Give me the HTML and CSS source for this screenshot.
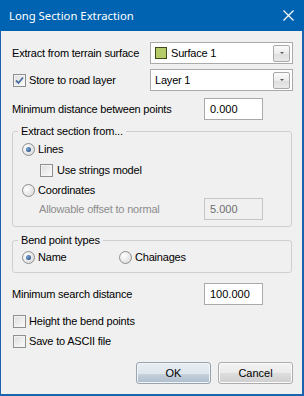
FILE: index.html
```html
<!DOCTYPE html>
<html lang="en">
  <head>
    <meta charset="UTF-8" />
    <title>Long Section Extraction</title>
    <link rel="stylesheet" href="styles.css">
  </head>
  <body>
    <div class="dialog">
      <div class="titlebar">
        <span class="title">Long Section Extraction</span>
        <svg class="close" width="11" height="11" viewBox="0 0 11 11">
          <path d="M0.5 0.5 L10.5 10.5 M10.5 0.5 L0.5 10.5" stroke="#fff" stroke-width="1.2" fill="none" />
        </svg>
      </div>

      <div class="content">
        <div class="row row-first">
          <span class="label">Extract from terrain surface</span>
          <div class="combo">
            <span class="swatch"></span>
            <span class="combo-text">Surface 1</span>
            <span class="drop"><span class="arrow"></span></span>
          </div>
        </div>

        <div class="row row-second">
          <span class="check-item">
            <span class="checkbox checked">
              <svg width="9" height="9" viewBox="0 0 9 9">
                <path d="M1 4.5 L3.5 7 L8 1.5" stroke="#4a6fa0" stroke-width="1.8" fill="none" />
              </svg>
            </span>
            Store to road layer
          </span>
          <div class="combo">
            <span class="combo-text">Layer 1</span>
            <span class="drop"><span class="arrow"></span></span>
          </div>
        </div>

        <div class="row row-third">
          <span class="label">Minimum distance between points</span>
          <div class="field">0.000</div>
        </div>

        <fieldset class="group group-extract">
          <legend>Extract section from...</legend>
          <div class="option"><span class="radio selected"></span>Lines</div>
          <div class="option option-sub">
            <span class="checkbox"></span>Use strings model
          </div>
          <div class="option option-coords"><span class="radio"></span>Coordinates</div>
          <div class="row row-offset">
            <span class="label disabled">Allowable offset to normal</span>
            <div class="field field-disabled">5.000</div>
          </div>
        </fieldset>

        <fieldset class="group group-bend">
          <legend>Bend point types</legend>
          <div class="radio-row">
            <div class="option option-name"><span class="radio selected"></span>Name</div>
            <div class="option"><span class="radio"></span>Chainages</div>
          </div>
        </fieldset>

        <div class="row row-search">
          <span class="label">Minimum search distance</span>
          <div class="field">100.000</div>
        </div>

        <div class="check-item check-height">
          <span class="checkbox"></span>Height the bend points
        </div>
        <div class="check-item check-ascii">
          <span class="checkbox"></span>Save to ASCII file
        </div>

        <div class="buttons">
          <button class="btn btn-default">OK</button>
          <button class="btn">Cancel</button>
        </div>
      </div>
    </div>
  </body>
</html>
```

FILE: styles.css
```css
* {
  margin: 0;
  padding: 0;
  box-sizing: border-box;
}

body {
  font-family: "Liberation Sans", Arial, sans-serif;
  font-size: 11px;
  color: #000;
  background: #fff;
}

.dialog {
  width: 304px;
  height: 396px;
  background-color: #f0f0f0;
  border-left: 1px solid #1c63ad;
  border-right: 2px solid #1c63ad;
  border-bottom: 2px solid #1c63ad;
}

.titlebar {
  height: 31px;
  background-color: #0063b1;
  display: flex;
  align-items: center;
  justify-content: space-between;
  padding: 0 10px 0 9px;
  margin-left: -1px;
  margin-right: -2px;
}

.title {
  font-family: "Noto Sans", "Open Sans", sans-serif;
  font-size: 11.3px;
  color: #fff;
}

.close {
  display: block;
}

.content {
  padding: 0 9px 0 11px;
}

.row {
  display: flex;
  align-items: center;
  justify-content: space-between;
  height: 22px;
}

.row-first {
  margin-top: 11px;
}

.row-second {
  margin-top: 5px;
}

.row-third {
  margin-top: 7px;
}

.row-search {
  margin-top: 10px;
}

.label {
  letter-spacing: -0.2px;
}

.label.disabled {
  color: #8d8d8d;
  padding-left: 17px;
}

.combo {
  width: 143px;
  height: 22px;
  background: #fff;
  border: 1px solid #aaaaaa;
  display: flex;
  align-items: center;
  padding: 0 2px 0 4px;
}

.combo-text {
  flex: 1;
  letter-spacing: -0.2px;
}

.swatch {
  width: 12px;
  height: 12px;
  background-color: #b5cb6a;
  border: 1px solid #3e4a1a;
  margin-right: 4px;
}

.drop {
  width: 17px;
  height: 17px;
  border: 1px solid #a9a9a9;
  border-radius: 2px;
  background: linear-gradient(#fbfbfb, #ececec 50%, #dedede 51%, #e9e9e9);
  display: flex;
  align-items: center;
  justify-content: center;
}

.arrow {
  width: 0;
  height: 0;
  border-left: 2px solid transparent;
  border-right: 2px solid transparent;
  border-top: 2px solid #555;
}

.field {
  width: 59px;
  height: 22px;
  margin-right: 30px;
  background: #fff;
  border: 1px solid #aaaaaa;
  padding: 0 0 0 5px;
  line-height: 20px;
}

.field-disabled {
  background: #f0f0f0;
  border-color: #c5c5c5;
  color: #6d6d6d;
  margin-right: 28px;
}

.check-item {
  display: flex;
  align-items: center;
  height: 14px;
  padding-left: 1px;
  letter-spacing: -0.2px;
}

.check-height {
  margin-top: 9px;
}

.check-ascii {
  margin-top: 6px;
}

.checkbox {
  width: 13px;
  height: 13px;
  border: 1px solid #8e8f8f;
  background: linear-gradient(135deg, #dcdcdc, #fdfdfd);
  box-shadow: inset 0 0 0 1px #f4f4f4;
  margin-right: 3px;
  display: flex;
  align-items: center;
  justify-content: center;
}

.radio {
  width: 13px;
  height: 13px;
  border-radius: 50%;
  border: 1px solid #8e8f8f;
  background: radial-gradient(circle at 35% 35%, #ffffff, #d5d5d5);
  margin-right: 3px;
  display: flex;
  align-items: center;
  justify-content: center;
}

.radio.selected::after {
  content: "";
  width: 5px;
  height: 5px;
  border-radius: 50%;
  background: radial-gradient(circle at 35% 35%, #7aa5d6, #1b3f73);
}

.group {
  border: 1px solid #cfcfcf;
  border-radius: 3px;
  margin-right: 1px;
  padding: 0 0 0 9px;
}

.group legend {
  padding: 0 3px;
  line-height: 14px;
  letter-spacing: -0.2px;
  margin-left: -4px;
}

.group-extract {
  margin-top: 4px;
  padding-bottom: 6px;
}

.group-bend {
  margin-top: 6px;
  padding-bottom: 8px;
}

.option {
  display: flex;
  align-items: center;
  height: 14px;
  letter-spacing: -0.2px;
}

.group-extract .option:first-of-type {
  margin-top: 4px;
}

.option-sub {
  margin-top: 7px;
  padding-left: 18px;
}

.option-sub .checkbox {
  margin-right: 4px;
}

.option-coords {
  margin-top: 6px;
}

.row-offset {
  margin-top: 1px;
}

.radio-row {
  display: flex;
  margin-top: 3px;
}

.option-name {
  width: 97px;
}

.buttons {
  display: flex;
  justify-content: flex-end;
  gap: 7px;
  margin-top: 14px;
}

.btn {
  width: 75px;
  height: 22px;
  font-family: "Liberation Sans", Arial, sans-serif;
  font-size: 11px;
  color: #000;
  border: 1px solid #acacac;
  border-radius: 3px;
  background: linear-gradient(#f2f2f2, #ebebeb 50%, #dddddd 52%, #cfcfcf);
  box-shadow: inset 0 0 0 1px #fbfbfb;
}

.btn-default {
  border-color: #9aa4ae;
  background: linear-gradient(#e9eef3, #dde5ed 55%, #c3ced9 58%, #aebdcc);
  box-shadow: inset 0 0 0 1px #f2f5f8;
}
```
